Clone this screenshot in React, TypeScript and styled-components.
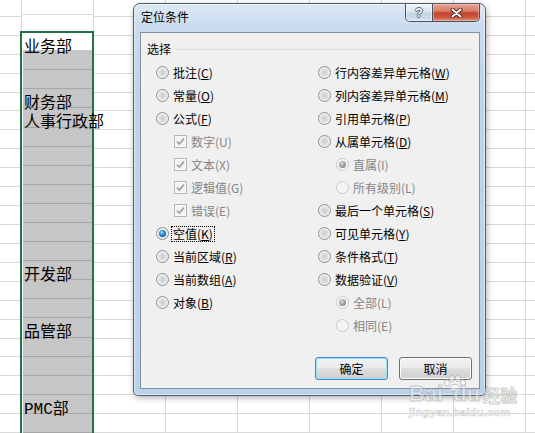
import React from "react";
import styled, { createGlobalStyle } from "styled-components";

const GlobalStyle = createGlobalStyle`
  html, body {
    margin: 0;
    padding: 0;
    background: #fff;
  }
  body {
    width: 535px;
    height: 433px;
    overflow: hidden;
    font-family: "Noto Sans CJK SC", "Noto Sans", sans-serif;
  }
`;

const ROW_COUNT = 23;
const COLUMN_WIDTHS = [22, 72, 72, 72, 72, 72, 72, 72, 30];
const rowHeight = (i: number) => (i === 0 ? 17 : 19.1);

const CELL_TEXT: Record<number, string> = {
  2: "业务部",
  5: "财务部",
  6: "人事行政部",
  14: "开发部",
  17: "品管部",
  21: "PMC部",
};

type Option = {
  label: string;
  key: string;
  type?: "radio" | "checkbox";
  checked?: boolean;
  disabled?: boolean;
  indent?: boolean;
  focused?: boolean;
};

const LEFT_OPTIONS: Option[] = [
  { label: "批注", key: "C" },
  { label: "常量", key: "O" },
  { label: "公式", key: "F" },
  { label: "数字", key: "U", type: "checkbox", checked: true, disabled: true, indent: true },
  { label: "文本", key: "X", type: "checkbox", checked: true, disabled: true, indent: true },
  { label: "逻辑值", key: "G", type: "checkbox", checked: true, disabled: true, indent: true },
  { label: "错误", key: "E", type: "checkbox", checked: true, disabled: true, indent: true },
  { label: "空值", key: "K", checked: true, focused: true },
  { label: "当前区域", key: "R" },
  { label: "当前数组", key: "A" },
  { label: "对象", key: "B" },
];

const RIGHT_OPTIONS: Option[] = [
  { label: "行内容差异单元格", key: "W" },
  { label: "列内容差异单元格", key: "M" },
  { label: "引用单元格", key: "P" },
  { label: "从属单元格", key: "D" },
  { label: "直属", key: "I", checked: true, disabled: true, indent: true },
  { label: "所有级别", key: "L", disabled: true, indent: true },
  { label: "最后一个单元格", key: "S" },
  { label: "可见单元格", key: "Y" },
  { label: "条件格式", key: "T" },
  { label: "数据验证", key: "V" },
  { label: "全部", key: "L", checked: true, disabled: true, indent: true },
  { label: "相同", key: "E", disabled: true, indent: true },
];

/* ---------- spreadsheet ---------- */

const Screen = styled.div`
  position: relative;
  width: 535px;
  height: 433px;
  overflow: hidden;
`;

const Sheet = styled.div`
  display: flex;
  width: 535px;
  height: 433px;
  overflow: hidden;
`;

const SheetColumn = styled.div<{ $width: number }>`
  display: flex;
  flex-direction: column;
  flex-shrink: 0;
  width: ${(p) => p.$width}px;
`;

const GridCell = styled.div<{ $height: number }>`
  box-sizing: border-box;
  height: ${(p) => p.$height}px;
  border-right: 1px solid #d9d9d9;
  border-bottom: 1px solid #d9d9d9;
`;

const SelectionRange = styled.div`
  position: relative;
  z-index: 1;
  align-self: flex-start;
  box-sizing: border-box;
  width: 74px;
  margin: -1px 0 0 -2px;
  padding-left: 1px;
  border: 2px solid #217346;
  border-bottom: none;
  background: #fff;
`;

const SelectedCell = styled.div<{ $height: number; $active?: boolean }>`
  box-sizing: border-box;
  height: ${(p) => p.$height}px;
  padding: 7px 0 0 1px;
  background: ${(p) => (p.$active ? "#fff" : "#c6c6c6")};
  border-bottom: 1px solid ${(p) => (p.$active ? "#c6c6c6" : "#a7a7a7")};
  font-family: "Liberation Mono", "Noto Sans CJK SC", monospace;
  font-size: 16px;
  line-height: 16px;
  color: #000;
  white-space: nowrap;
  overflow: visible;
`;

/* ---------- dialog window ---------- */

const Window = styled.div`
  position: absolute;
  left: 133px;
  top: 3px;
  z-index: 5;
  box-sizing: border-box;
  width: 353px;
  height: 393px;
  display: flex;
  flex-direction: column;
  padding: 0 5px 6px 6px;
  border: 1px solid #4f5b69;
  border-radius: 7px 7px 5px 5px;
  background: linear-gradient(180deg, #dde9f6 0px, #cbdcf0 22px, #bfd5ee 70px, #bad1ec 100%);
  box-shadow: inset 0 0 0 1px rgba(255, 255, 255, 0.55), 1px 2px 6px rgba(0, 0, 0, 0.3);
  font-family: "Noto Sans CJK SC", "Noto Sans", sans-serif;
  font-size: 12px;
`;

const TitleBar = styled.div`
  display: flex;
  align-items: flex-start;
  height: 28px;
  flex-shrink: 0;
`;

const Title = styled.div`
  flex: 1;
  padding: 6px 0 0 1px;
  line-height: 14px;
  color: #000;
`;

const CaptionButtons = styled.div`
  display: flex;
  height: 18px;
  box-sizing: border-box;
  border: 1px solid #46515e;
  border-top: none;
  border-radius: 0 0 5px 5px;
  overflow: hidden;
`;

const HelpButton = styled.div`
  width: 26px;
  display: flex;
  align-items: center;
  justify-content: center;
  border-right: 1px solid #46515e;
  background: linear-gradient(180deg, #eef3f9 0%, #dae4ef 48%, #c3d3e4 52%, #d3dfeb 100%);
  box-shadow: inset 0 0 0 1px rgba(255, 255, 255, 0.5);
  font-family: "Liberation Sans", sans-serif;
  font-weight: bold;
  font-size: 13px;
  line-height: 13px;
  color: #fff;
  text-shadow: 1px 0 0 #56616e, -1px 0 0 #56616e, 0 1px 0 #56616e, 0 -1px 0 #56616e;
`;

const CloseButton = styled.div`
  width: 46px;
  display: flex;
  align-items: center;
  justify-content: center;
  background: linear-gradient(180deg, #e8a898 0%, #d67a66 42%, #c4432d 52%, #cb583f 78%, #e29479 100%);
  box-shadow: inset 0 0 0 1px rgba(255, 220, 210, 0.45);
`;

const Client = styled.div`
  flex: 1;
  display: flex;
  flex-direction: column;
  border: 1px solid #83909e;
  background: #f0f0f0;
`;

const GroupHeader = styled.div`
  display: flex;
  align-items: center;
  gap: 4px;
  height: 16px;
  padding: 8px 6px 0 6px;
  line-height: 16px;
  color: #000;
`;

const GroupRule = styled.div`
  flex: 1;
  height: 1px;
  background: #d5dfe5;
`;

const OptionGrid = styled.div`
  display: grid;
  grid-template-columns: 162px 1fr;
  padding-left: 15px;
  margin-top: 4px;
`;

const OptionColumn = styled.div`
  display: flex;
  flex-direction: column;
`;

const OptionRow = styled.div<{ $indent?: boolean }>`
  display: flex;
  align-items: center;
  gap: 4px;
  height: 23px;
  padding-left: ${(p) => (p.$indent ? 18 : 0)}px;
`;

const RadioCircle = styled.span<{ $disabled?: boolean }>`
  box-sizing: border-box;
  width: 13px;
  height: 13px;
  flex-shrink: 0;
  display: flex;
  align-items: center;
  justify-content: center;
  border-radius: 50%;
  border: 1px solid ${(p) => (p.$disabled ? "#c9c9c9" : "#8f8f8f")};
  background: ${(p) =>
    p.$disabled
      ? "#f4f4f4"
      : "radial-gradient(circle at 50% 50%, #cbcbcb 0%, #e0e0e0 45%, #fafafa 100%)"};
  box-shadow: inset 0 0 0 1px ${(p) => (p.$disabled ? "#f6f6f6" : "#f2f2f2")};
`;

const RadioDot = styled.span<{ $disabled?: boolean }>`
  width: 7px;
  height: 7px;
  border-radius: 50%;
  background: ${(p) =>
    p.$disabled
      ? "radial-gradient(circle at 40% 35%, #d8d8d8 0%, #a3a3a3 45%, #7d7d7d 100%)"
      : "radial-gradient(circle at 40% 35%, #a8ddfa 0%, #2f8bd4 40%, #0c3c74 100%)"};
`;

const CheckBox = styled.span`
  box-sizing: border-box;
  width: 13px;
  height: 13px;
  flex-shrink: 0;
  display: flex;
  align-items: center;
  justify-content: center;
  border: 1px solid #b6b6b6;
  background: #f4f4f4;
  box-shadow: inset 0 0 0 1px #fafafa;
`;

const OptionLabel = styled.span<{ $disabled?: boolean; $focused?: boolean }>`
  line-height: 14px;
  white-space: nowrap;
  color: ${(p) => (p.$disabled ? "#858585" : "#000")};
  ${(p) =>
    p.$focused &&
    `
    padding: 0 1px;
    margin-left: -2px;
    border: 1px dotted #000;
  `}

  u {
    text-decoration: underline;
    text-underline-offset: 1px;
  }
`;

const ButtonRow = styled.div`
  margin-top: auto;
  display: flex;
  justify-content: flex-end;
  gap: 11px;
  padding: 0 7px 8px 0;
`;

const DialogButton = styled.div<{ $default?: boolean }>`
  box-sizing: border-box;
  width: 73px;
  height: 23px;
  display: flex;
  align-items: center;
  justify-content: center;
  border-radius: 3px;
  border: 1px solid ${(p) => (p.$default ? "#3a8fd6" : "#707070")};
  background: linear-gradient(180deg, #f2f2f2 0%, #ebebeb 46%, #dddddd 52%, #cfcfcf 100%);
  box-shadow: inset 0 0 0 1px ${(p) => (p.$default ? "#9fdcf8" : "#fbfbfb")};
  color: #000;
  font-size: 12px;
  line-height: 14px;
`;

/* ---------- watermark ---------- */

const Watermark = styled.div`
  position: absolute;
  left: 409px;
  top: 374px;
  z-index: 10;
  pointer-events: none;
  display: flex;
  flex-direction: column;
  color: rgba(255, 255, 255, 0.45);
  -webkit-text-stroke: 1px rgba(165, 165, 165, 0.55);
`;

const BrandLine = styled.div`
  display: flex;
  align-items: flex-end;
  font-family: "Liberation Sans", sans-serif;
  font-weight: bold;
  font-size: 22px;
  line-height: 22px;
  height: 31px;
`;

const BrandCjk = styled.span`
  margin-left: 3px;
  font-family: "Noto Sans CJK SC", sans-serif;
  font-size: 17px;
  line-height: 20px;
`;

const Paw = styled.svg`
  align-self: flex-start;
  margin: 0 -14px 0 -2px;
`;

const SiteLine = styled.div`
  margin-top: 2px;
  font-family: "Liberation Sans", sans-serif;
  font-weight: bold;
  font-size: 11px;
  line-height: 11px;
  letter-spacing: 0.3px;
  -webkit-text-stroke: 0.6px rgba(165, 165, 165, 0.55);
`;

/* ---------- pieces ---------- */

const CheckMark = () => (
  <svg width="9" height="9" viewBox="0 0 9 9">
    <polyline points="1,4.6 3.4,7 8,1.6" fill="none" stroke="#a2a2a2" strokeWidth="1.7" />
  </svg>
);

const CloseGlyph = () => (
  <svg width="13" height="10" viewBox="0 0 13 10">
    <path d="M2.5 1.5 L10.5 8.5 M10.5 1.5 L2.5 8.5" stroke="#4a2520" strokeWidth="3.8" strokeLinecap="round" />
    <path d="M2.5 1.5 L10.5 8.5 M10.5 1.5 L2.5 8.5" stroke="#ffffff" strokeWidth="2" strokeLinecap="round" />
  </svg>
);

const OptionItem = ({ option }: { option: Option }) => {
  const { label, key, type = "radio", checked, disabled, indent, focused } = option;
  return (
    <OptionRow $indent={indent}>
      {type === "checkbox" ? (
        <CheckBox>{checked && <CheckMark />}</CheckBox>
      ) : (
        <RadioCircle $disabled={disabled}>{checked && <RadioDot $disabled={disabled} />}</RadioCircle>
      )}
      <OptionLabel $disabled={disabled} $focused={focused}>
        {label}(
        {disabled ? key : <u>{key}</u>})
      </OptionLabel>
    </OptionRow>
  );
};

const SpreadSheet = () => (
  <Sheet>
    {COLUMN_WIDTHS.map((width, col) => (
      <SheetColumn key={col} $width={width}>
        {col === 1 ? (
          <>
            <GridCell $height={rowHeight(0)} />
            <GridCell $height={rowHeight(1)} />
            <SelectionRange>
              {Array.from({ length: ROW_COUNT - 2 }, (_, i) => {
                const row = i + 2;
                return (
                  <SelectedCell key={row} $active={row === 2} $height={row === 2 ? 18.1 : 19.1}>
                    {CELL_TEXT[row]}
                  </SelectedCell>
                );
              })}
            </SelectionRange>
          </>
        ) : (
          Array.from({ length: ROW_COUNT }, (_, row) => (
            <GridCell key={row} $height={rowHeight(row)} />
          ))
        )}
      </SheetColumn>
    ))}
  </Sheet>
);

const GoToSpecialDialog = () => (
  <Window>
    <TitleBar>
      <Title>定位条件</Title>
      <CaptionButtons>
        <HelpButton>?</HelpButton>
        <CloseButton>
          <CloseGlyph />
        </CloseButton>
      </CaptionButtons>
    </TitleBar>
    <Client>
      <GroupHeader>
        <span>选择</span>
        <GroupRule />
      </GroupHeader>
      <OptionGrid>
        <OptionColumn>
          {LEFT_OPTIONS.map((o) => (
            <OptionItem key={o.label} option={o} />
          ))}
        </OptionColumn>
        <OptionColumn>
          {RIGHT_OPTIONS.map((o) => (
            <OptionItem key={o.label} option={o} />
          ))}
        </OptionColumn>
      </OptionGrid>
      <ButtonRow>
        <DialogButton $default>确定</DialogButton>
        <DialogButton>取消</DialogButton>
      </ButtonRow>
    </Client>
  </Window>
);

export default function App() {
  return (
    <>
      <GlobalStyle />
      <Screen>
        <SpreadSheet />
        <GoToSpecialDialog />
        <Watermark>
          <BrandLine>
            Bai
            <Paw width="26" height="18" viewBox="0 0 26 18">
              <g fill="rgba(255,255,255,0.45)" stroke="rgba(165,165,165,0.6)" strokeWidth="1">
                <ellipse cx="6" cy="9" rx="2.6" ry="3.2" />
                <ellipse cx="11" cy="4.5" rx="2.6" ry="3.2" />
                <ellipse cx="17" cy="4.5" rx="2.6" ry="3.2" />
                <ellipse cx="22" cy="9" rx="2.6" ry="3.2" />
                <ellipse cx="14" cy="14" rx="5" ry="3.6" />
              </g>
            </Paw>
            du
            <BrandCjk>经验</BrandCjk>
          </BrandLine>
          <SiteLine>jingyan.baidu.com</SiteLine>
        </Watermark>
      </Screen>
    </>
  );
}
